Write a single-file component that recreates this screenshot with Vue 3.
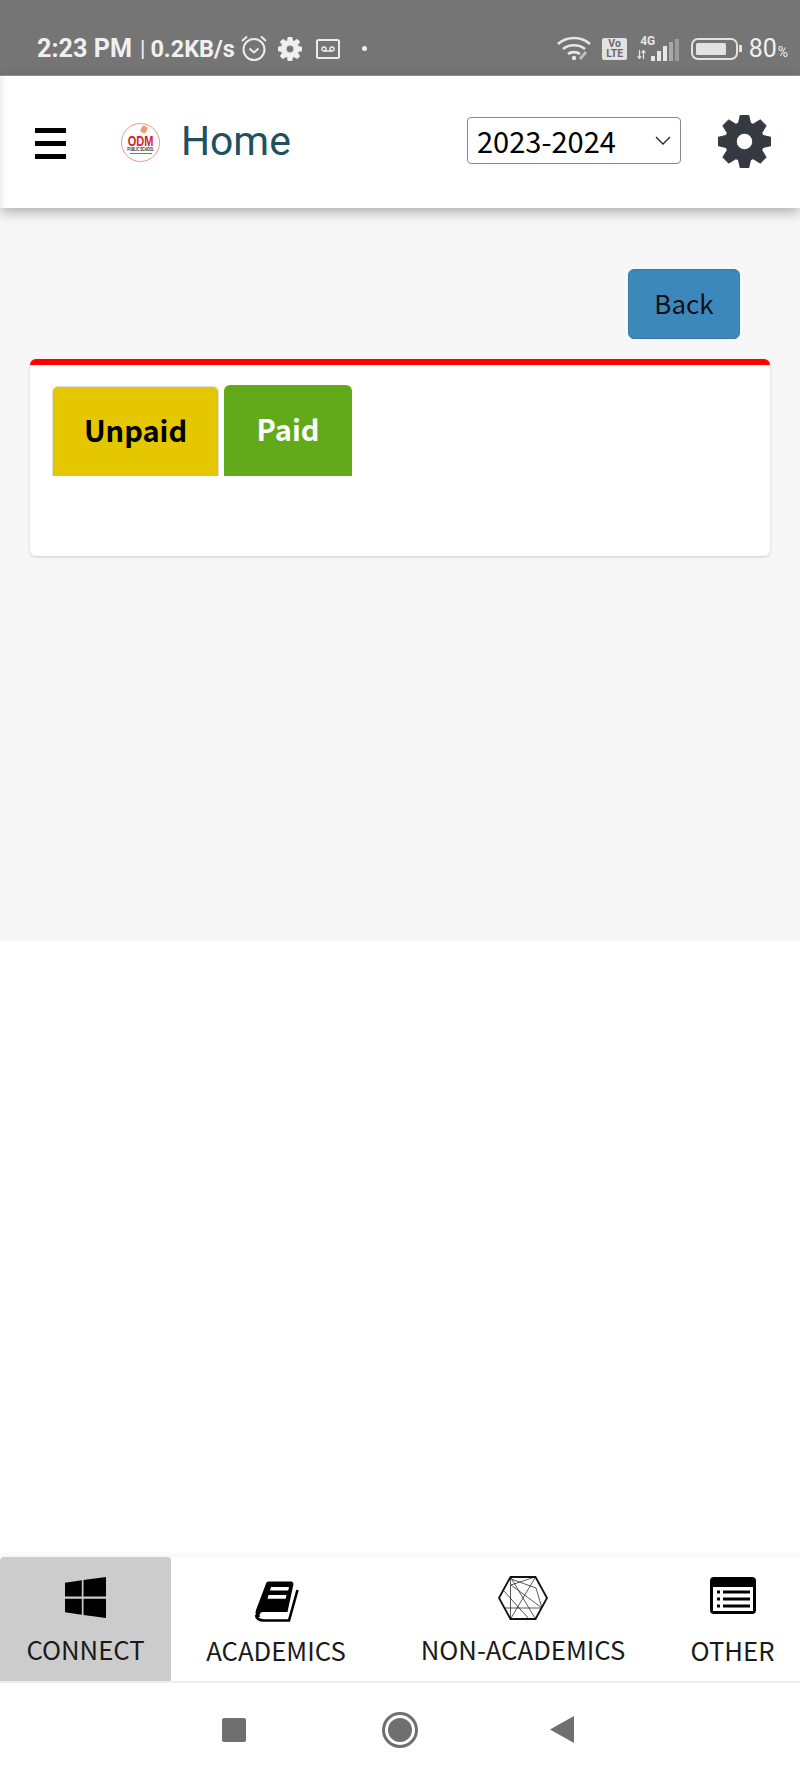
<script setup>
function gearPath(size) {
  const c = size / 2
  const outer = size / 2
  const root = size * 0.345
  const hole = size * 0.155
  const halfOut = size * 0.078
  const halfRoot = size * 0.115
  const pts = []
  for (let i = 0; i < 8; i++) {
    const a = (i * Math.PI) / 4 - Math.PI / 2
    const ux = Math.cos(a)
    const uy = Math.sin(a)
    const vx = -uy
    const vy = ux
    const p = (r, w) => `${(c + ux * r + vx * w).toFixed(2)} ${(c + uy * r + vy * w).toFixed(2)}`
    pts.push(p(root, -halfRoot), p(outer, -halfOut), p(outer, halfOut), p(root, halfRoot))
  }
  return `M${pts.join('L')}Z M${c + hole} ${c}a${hole} ${hole} 0 1 0 ${-2 * hole} 0a${hole} ${hole} 0 1 0 ${2 * hole} 0Z`
}
const bigGear = gearPath(54)
const smallGear = gearPath(24)
const bars = [
  { h: 5, o: 1 }, { h: 10, o: 1 }, { h: 15, o: 1 }, { h: 19, o: 0.45 }, { h: 22, o: 0.35 }
]
</script>

<template>
  <div class="page">
    <div class="status">
      <span class="time">2:23 PM</span>
      <span class="sep">|</span>
      <span class="speed">0.2KB/s</span>
      <svg class="alarm" width="28" height="28" viewBox="0 0 28 28" fill="none" stroke="#ececec">
        <circle cx="14" cy="15.5" r="10.5" stroke-width="2" />
        <path d="M9.5 14.5l4.5 4 4.5-4" stroke-width="2" />
        <path d="M2 7l5-4.5M26 7l-5-4.5" stroke-width="2" />
      </svg>
      <svg class="scog" width="24" height="24" viewBox="0 0 24 24"><path :d="smallGear" fill="#f0f0f0" fill-rule="evenodd" stroke="#f0f0f0" stroke-width=".6" stroke-linejoin="round" /></svg>
      <svg class="tape" width="24" height="20" viewBox="0 0 24 20" fill="none" stroke="#ececec" stroke-width="2">
        <rect x="1" y="1" width="22" height="18" rx="1.5" />
        <circle cx="8" cy="10" r="2" stroke-width="1.5" />
        <circle cx="16" cy="10" r="2" stroke-width="1.5" />
        <path d="M8 12h8" stroke-width="1.5" />
      </svg>
      <span class="sdot"></span>
      <span class="grow"></span>
      <svg class="wifi" width="36" height="26" viewBox="0 0 36 26" fill="none" stroke="#e6e6e6" stroke-width="2.6">
        <path d="M2 9c9-8 23-8 32 0M7 14c6-5 16-5 22 0M12 19c3-2.500 9-2.500 12 0" />
        <circle cx="18" cy="23" r="2.200" fill="#e6e6e6" stroke="none" />
        <path d="M24 24l6-7" stroke-width="3" stroke="#bdbdbd" />
      </svg>
      <span class="volte"><span>Vo</span><span>LTE</span></span>
      <span class="net">
        <span class="g4">4G</span>
        <svg class="arrows" width="9" height="9" viewBox="0 0 9 9" fill="none" stroke="#e6e6e6" stroke-width="1.200">
          <path d="M2.500 0v8M.5 6l2 2.500 2-2.500M6.500 9V1M4.500 3l2-2.500 2 2.500" />
        </svg>
      </span>
      <span class="sig">
        <i v-for="(b, i) in bars" :key="i" :style="{ height: b.h + 'px', opacity: b.o }"></i>
      </span>
      <span class="batt"><span class="fill"></span></span>
      <span class="bnub"></span>
      <span class="pct">80<small>%</small></span>
    </div>

    <header class="top">
      <svg class="burger" width="31" height="31" viewBox="0 0 31 31">
        <path d="M0 0h31v5H0zM0 13h31v5H0zM0 26h31v5H0z" fill="#000" />
      </svg>
      <div class="logo">
        <span class="spark"></span>
        <span class="odm">ODM</span>
        <span class="pub">PUBLIC SCHOOL</span>
        <span class="rule"></span>
      </div>
      <span class="title">Home</span>
      <span class="grow"></span>
      <div class="select">
        <span class="year">2023-2024</span>
        <svg width="16" height="9" viewBox="0 0 16 9" fill="none" stroke="#222" stroke-width="1.300"><path d="M1 1l7 7 7-7" /></svg>
      </div>
      <svg class="gear" width="53" height="53" viewBox="0 0 54 54"><path :d="bigGear" fill="#343a40" fill-rule="evenodd" stroke="#343a40" stroke-width="1" stroke-linejoin="round" /></svg>
    </header>

    <main class="main">
      <div class="back-row"><button class="back"><span>Back</span></button></div>
      <section class="card">
        <div class="tabs">
          <div class="tab unpaid">Unpaid</div>
          <div class="tab paid">Paid</div>
        </div>
      </section>
    </main>

    <div class="grow"></div>

    <nav class="tabbar">
      <div class="cell cell-connect">
        <svg class="ico" width="41" height="41" viewBox="0 32 448 448"><path d="M0 93.7l183.6-25.3v177.4H0V93.7zm0 324.6l183.6 25.3V268.4H0v149.9zm202.2 28L448 480V268.4H202.2v177.9zm0-380.6v180.1H448V32L202.2 65.700z" /></svg>
        <span class="lbl high">CONNECT</span>
      </div>
      <div class="cell">
        <svg class="ico" width="50" height="46" viewBox="0 0 50 46">
          <path d="M18 4.500H40a2.500 2.500 0 0 1 2.400 3L36.500 35H12C9 35 8 38 9 40H7C4.500 39 4 36.500 5 33L14.500 8C15 5.500 16 4.500 18 4.500z" />
          <path d="M20 10h18l-.8 3.500H19zM17.500 18h18l-.8 3.800H16.500z" fill="#fff" />
          <path d="M46.500 13L38 43.500H13C8 43.500 5.500 42 5 38" fill="none" stroke="#000" stroke-width="2.600" />
        </svg>
        <span class="lbl">ACADEMICS</span>
      </div>
      <div class="cell">
        <svg class="ico hex" width="50" height="44" viewBox="0 0 50 44" fill="none" stroke="#111">
          <path d="M1 22L12.500 1h25L49 22 37.500 43h-25z" stroke-width="1.800" />
          <path d="M12.500 1l25 42M37.500 1l-25 42M6 32h38M12.500 1v42M37 1L13 9M13 9l31 23M5 14l26 29M38 12l6 20M13 3l25 9" stroke-width=".7" />
        </svg>
        <span class="lbl high">NON-ACADEMICS</span>
      </div>
      <div class="cell">
        <svg class="ico" width="46" height="37" viewBox="0 0 46 37">
          <rect width="46" height="37" rx="4" />
          <rect x="3" y="10" width="40" height="24" fill="#fff" />
          <path d="M13 13.500h27v3H13zM13 20.500h27v3H13zM13 27.500h27v3H13zM7 13.500h3v3H7zM7 20.500h3v3H7zM7 27.500h3v3H7z" />
        </svg>
        <span class="lbl">OTHER</span>
      </div>
    </nav>

    <div class="sysnav">
      <span class="stop"></span>
      <span class="home-btn"><span></span></span>
      <svg width="24" height="27" viewBox="0 0 24 27"><path d="M0 13.500L24 0v27z" fill="#6f6f6f" /></svg>
    </div>
  </div>
</template>

<style>
html, body { margin: 0; background: #fff; }
</style>

<style scoped>
.page {
  width: 800px;
  height: 1778px;
  display: flex;
  flex-direction: column;
  overflow: hidden;
  background: #fff;
  font-family: "Noto Sans CJK SC", "Noto Sans", sans-serif;
}
.grow { flex: 1; }

.status {
  flex: none;
  box-sizing: border-box;
  height: 76px;
  padding: 22px 12px 0 37px;
  display: flex;
  align-items: center;
  background: #757575;
  color: #f0f0f0;
  font-family: Roboto, sans-serif;
  border-bottom: 1px solid #9a9a9a;
}
.time { font-size: 25.200px; font-weight: 700; }
.speed { font-size: 23.500px; font-weight: 700; }
.sep { font-size: 22px; margin: 0 5px 0 8px; font-weight: 400; }
.alarm { margin-left: 5px; margin-top: -2px; }
.scog { margin-left: 10px; }
.tape { margin-left: 14px; }
.sdot { width: 5px; height: 5px; border-radius: 50%; background: #f0f0f0; margin-left: 22px; }
.wifi { margin-right: 10px; margin-top: -1px; }
.volte {
  width: 25px;
  height: 22px;
  background: #e2e2e2;
  border-radius: 2px;
  color: #6a6a6a;
  font-size: 10.500px;
  font-weight: 700;
  line-height: 10px;
  display: flex;
  flex-direction: column;
  align-items: center;
  justify-content: center;
  margin-right: 9px;
}
.net { width: 14px; height: 24px; position: relative; }
.g4 { position: absolute; left: 4px; top: -3px; font-size: 12px; font-weight: 700; color: #e6e6e6; }
.arrows { position: absolute; left: 1px; top: 13px; }
.sig { display: flex; align-items: flex-end; gap: 2px; height: 24px; margin-right: 12px; margin-left: 1px; }
.sig i { display: block; width: 4px; background: #e6e6e6; }
.batt {
  width: 47px;
  height: 22px;
  box-sizing: border-box;
  border: 2.500px solid #e2e2e2;
  border-radius: 7px;
  padding: 3px;
  display: flex;
}
.fill { width: 30px; background: #e2e2e2; border-radius: 1.500px; }
.bnub { width: 2.500px; height: 7px; background: #e2e2e2; margin-left: 1px; margin-right: 7px; }
.pct { font-size: 25px; font-weight: 400; }
.pct small { font-size: 14px; margin-left: 1px; }

.top {
  height: 132px;
  flex: none;
  box-sizing: border-box;
  display: flex;
  align-items: center;
  background: #fff;
  padding: 0 29px 0 35px;
  box-shadow: 0 4px 12px rgba(0, 0, 0, .3), inset 10px 0 10px -10px rgba(0, 0, 0, .12);
  position: relative;
  z-index: 1;
}
.burger { margin-top: 2px; }
.logo {
  width: 39px;
  height: 39px;
  margin-left: 55px;
  box-sizing: border-box;
  border: 1px solid #e89a90;
  border-radius: 50%;
  display: flex;
  flex-direction: column;
  align-items: center;
  justify-content: center;
  position: relative;
  font-family: "Liberation Sans", sans-serif;
  overflow: hidden;
}
.spark { position: absolute; left: 19px; top: 2px; width: 6px; height: 7px; background: #ee9c6c; border-radius: 2px; transform: rotate(30deg); }
.odm { color: #d9202c; font-size: 11px; font-weight: 700; line-height: 10px; margin-top: 6px; transform: scaleY(1.300); }
.pub { font-size: 4.500px; font-weight: 700; line-height: 6px; color: #222; white-space: nowrap; margin-top: 1px; transform: scaleX(.72); }
.rule { width: 22px; height: 1px; background: #777; }
.title {
  font-family: Roboto, sans-serif;
  font-size: 40.800px;
  color: #204f60;
  margin-left: 21px;
  margin-top: -2px;
}
.select {
  width: 214px;
  height: 47px;
  box-sizing: border-box;
  border: 1.500px solid #888;
  border-radius: 4px;
  display: flex;
  align-items: center;
  justify-content: space-between;
  padding: 0 9px 0 9px;
  font-size: 29px;
  color: #000;
  margin-top: -4px;
}
.year { margin-top: -1px; }
.gear { margin-left: 37px; margin-top: -2px; }

.main {
  height: 733px;
  flex: none;
  box-sizing: border-box;
  background: #f7f7f7;
  padding: 61px 30px 0;
}
.back-row { display: flex; justify-content: flex-end; padding-right: 30px; }
.back {
  width: 112px;
  height: 70px;
  background: #3c88bb;
  border: 1px solid #367aa8;
  border-radius: 6px;
  font-family: inherit;
  font-size: 26px;
  color: #111;
  padding: 0 0 4px;
}
.card {
  margin-top: 20px;
  height: 197px;
  box-sizing: border-box;
  background: #fff;
  border-top: 6px solid #f00;
  border-radius: 6px;
  box-shadow: 0 1px 3px rgba(0, 0, 0, .18);
  padding: 20px 22px 0;
}
.tabs { display: flex; gap: 5px; align-items: flex-end; }
.tab {
  box-sizing: border-box;
  border-radius: 6px 6px 0 0;
  display: flex;
  align-items: center;
  justify-content: center;
  font-size: 29px;
  font-weight: 700;
  padding-bottom: 5px;
}
.unpaid { width: 167px; background: #e5c700; color: #000; border: 1px solid #ddd; border-bottom: none; height: 90px; }
.paid { width: 128px; background: #62aa1a; color: #fff; height: 91px; }

.tabbar {
  height: 124px;
  flex: none;
  display: grid;
  grid-template-columns: 171px 210px 284px 135px;
  border-bottom: 2px solid #eee;
  box-shadow: 0 -3px 4px rgba(0, 0, 0, .04);
  background: #fff;
}
.cell {
  display: flex;
  flex-direction: column;
  align-items: center;
  color: #1a1a1a;
  position: relative;
}
.cell-connect { background: #ccc; border-radius: 4px 4px 0 0; }
.ico { margin-top: 20px; position: absolute; color: #000; }
.hex { margin-top: 19px; }
.lbl {
  position: absolute;
  top: 77px;
  font-size: 25.700px;
  line-height: 32px;
  white-space: nowrap;
}
.lbl.high { top: 76px; }

.sysnav {
  height: 95px;
  flex: none;
  display: flex;
  align-items: center;
  justify-content: center;
  padding: 0 4px 2px 0;
  box-sizing: border-box;
}
.stop { width: 24px; height: 24px; border-radius: 2px; background: #6f6f6f; margin-right: 136px; }
.home-btn {
  width: 36px;
  height: 36px;
  box-sizing: border-box;
  border: 3px solid #6f6f6f;
  border-radius: 50%;
  padding: 3px;
  display: flex;
  margin-right: 132px;
}
.home-btn span { flex: 1; border-radius: 50%; background: #6f6f6f; }
</style>
